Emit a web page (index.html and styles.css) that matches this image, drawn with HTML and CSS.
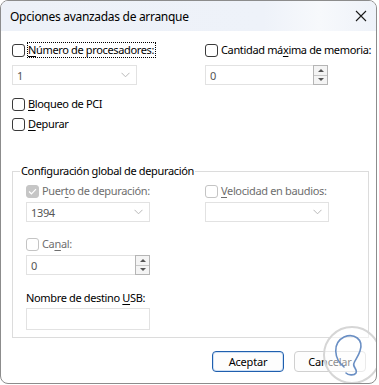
FILE: index.html
```html
<!DOCTYPE html>
<html lang="es">
<head>
<meta charset="utf-8">
<link rel="stylesheet" href="styles.css">
</head>
<body>
<div class="window">
  <div class="titlebar">
    <span class="title">Opciones avanzadas de arranque</span>
    <svg class="close" width="12" height="12" viewBox="0 0 12 12"><path d="M1 1L11 11M11 1L1 11" stroke="#1a1a1a" stroke-width="1.1" fill="none"/></svg>
  </div>
  <div class="content">
    <div class="grid">
      <div class="col">
        <label class="check"><span class="box"></span><span class="focus"><u>N</u>úmero de procesadores:</span></label>
        <div class="select disabled"><span>1</span><svg class="chev" width="9" height="6" viewBox="0 0 9 6"><path d="M0.5 0.8L4.5 4.8L8.5 0.8" stroke="#b8b8b8" fill="none"/></svg></div>
      </div>
      <div class="col">
        <label class="check"><span class="box"></span><span>Cantidad má<u>x</u>ima de memoria:</span></label>
        <div class="spin"><span class="val">0</span><div class="spinbtns"><span class="sb up"></span><span class="sb down"></span></div></div>
      </div>
    </div>
    <label class="check mt12"><span class="box"></span><span><u>B</u>loqueo de PCI</span></label>
    <label class="check mt6"><span class="box"></span><span><u>D</u>epurar</span></label>

    <fieldset class="group">
      <legend>Configuración global de depuración</legend>
      <div class="grid inner">
        <div class="col">
          <label class="check dis"><span class="box checked"><svg width="9" height="7" viewBox="0 0 9 7"><path d="M1 3.5L3.4 5.8L8 1.2" stroke="#fff" stroke-width="1.2" fill="none"/></svg></span><span>Puer<u>t</u>o de depuración:</span></label>
          <div class="select disabled tight"><span>1394</span><svg class="chev" width="9" height="6" viewBox="0 0 9 6"><path d="M0.5 0.8L4.5 4.8L8.5 0.8" stroke="#b8b8b8" fill="none"/></svg></div>
        </div>
        <div class="col">
          <label class="check dis"><span class="box"></span><span><u>V</u>elocidad en baudios:</span></label>
          <div class="select disabled tight"><span></span><svg class="chev" width="9" height="6" viewBox="0 0 9 6"><path d="M0.5 0.8L4.5 4.8L8.5 0.8" stroke="#b8b8b8" fill="none"/></svg></div>
        </div>
      </div>
      <label class="check dis mt15"><span class="box"></span><span>Ca<u>n</u>al:</span></label>
      <div class="spin narrow"><span class="val">0</span><div class="spinbtns"><span class="sb up"></span><span class="sb down"></span></div></div>
      <div class="plain mt16">Nombre de destino <u>U</u>SB:</div>
      <div class="textbox"></div>
    </fieldset>

    <div class="buttons">
      <button class="btn primary">Aceptar</button>
      <button class="btn">Cancelar</button>
    </div>
  </div>
  <svg class="watermark" width="60" height="60" viewBox="0 0 60 60">
    <circle cx="30" cy="30" r="28" fill="rgba(255,255,255,0.55)" stroke="#d6d6d6" stroke-width="2"/>
    <path d="M22 42C12 34 10 18 22 12C32 8 42 14 38 26C36 32 33 35 32 38C30 42 36 44 34 48C32 51 26 50 24 48" stroke="#6a8fc4" stroke-width="1.6" fill="none" stroke-linecap="round"/>
  </svg>
</div>
</body>
</html>
```

FILE: styles.css
```css
* { box-sizing: border-box; }
html, body { margin: 0; padding: 0; background: #ffffff; }
body {
  font-family: "Noto Sans", "Open Sans", sans-serif;
  font-size: 11px;
  letter-spacing: -0.35px;
  color: #000;
}
.window {
  position: relative;
  width: 377px;
  height: 384px;
  border: 1px solid #8c8c8c;
  border-radius: 8px;
  background: #fff;
  overflow: hidden;
}
.titlebar {
  height: 30px;
  display: flex;
  align-items: center;
  justify-content: space-between;
  padding: 0 8px 0 9px;
  background: linear-gradient(90deg, #edf1f8 0%, #eef2f9 70%, #f7f9fc 85%, #eef2f9 100%);
}
.title { font-size: 12px; letter-spacing: -0.3px; }
.close { margin-right: 1px; }
.content {
  padding: 12px 8px 0 11px;
}
.grid {
  display: grid;
  grid-template-columns: 193px 1fr;
}
.grid.inner { grid-template-columns: 179px 1fr; }
.col { display: flex; flex-direction: column; }
.check {
  display: flex;
  align-items: center;
  height: 14px;
  line-height: 14px;
  white-space: nowrap;
}
.box {
  width: 13px;
  height: 13px;
  border: 1px solid #3a3a3a;
  border-radius: 3px;
  margin-right: 3px;
  flex: none;
  display: flex;
  align-items: center;
  justify-content: center;
  background: #fff;
}
.focus { outline: 1px dotted #000; outline-offset: 0; padding: 0 1px 0 0; }
.dis { color: #6e6e6e; }
.dis .box { border-color: #c4c4c4; }
.box.checked { background: #c6c6c6; border-color: #c6c6c6; }
u { text-decoration-thickness: 1px; text-underline-offset: 2px; }
.mt12 { margin-top: 12px; }
.mt6 { margin-top: 6px; }
.mt15 { margin-top: 15px; }
.mt16 { margin-top: 16px; }
.select, .spin, .textbox {
  margin-top: 8px;
  height: 20px;
  border: 1px solid #e2e2e2;
  display: flex;
  align-items: center;
  justify-content: space-between;
  padding: 0 6px 0 4px;
  color: #555;
}
.select.tight { margin-top: 4px; }
.col .select { width: 125px; }
.grid.inner .col .select { width: 124px; }
.spin { width: 123px; padding-right: 0; position: relative; }
.spin.narrow { width: 124px; margin-top: 4px; }
.spinbtns {
  width: 15px;
  height: 20px;
  margin-right: -1px;
  display: flex;
  flex-direction: column;
  border: 1px solid #b5b5b5;
}
.sb {
  flex: 1;
  background: #f4f4f4;
  display: flex;
  align-items: center;
  justify-content: center;
  position: relative;
}
.sb.up { border-bottom: 1px solid #c8c8c8; }
.sb::after {
  content: "";
  width: 0; height: 0;
  border-left: 3px solid transparent;
  border-right: 3px solid transparent;
}
.sb.up::after { border-bottom: 3px solid #555; }
.sb.down::after { border-top: 3px solid #555; }
.group {
  margin: 32px 0 0 0;
  padding: 5px 0 7px 13px;
  border: 1px solid #dcdcdc;
  border-radius: 0;
  width: 357px;
}
.group legend {
  padding: 0 1px 0 1px;
  margin-left: -6px;
  line-height: 16px;
}
.plain { line-height: 14px; }
.textbox { width: 124px; height: 22px; margin-top: 3px; }
.buttons {
  display: flex;
  justify-content: flex-end;
  gap: 10px;
  margin-top: 13px;
  padding-right: 2px;
}
.btn {
  font-family: inherit;
  font-size: 11px;
  letter-spacing: -0.2px;
  height: 21px;
  width: 72px;
  background: #fdfdfd;
  border: 1px solid #d0d0d0;
  border-radius: 4px;
  color: #000;
  padding: 0;
}
.btn.primary { border-color: #1f5fae; box-shadow: inset 0 0 0 1px #cfe0f4; }
.watermark {
  position: absolute;
  right: -6px;
  bottom: -2px;
}
```
